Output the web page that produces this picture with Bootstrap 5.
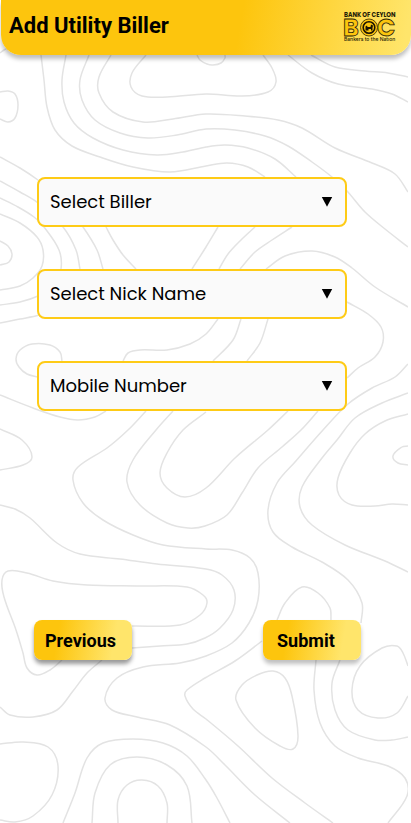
<!DOCTYPE html>
<html lang="en">
<head>
<meta charset="utf-8">
<meta name="viewport" content="width=device-width, initial-scale=1">
<title>Add Utility Biller</title>
<link href="https://cdn.jsdelivr.net/npm/bootstrap@5.3.0/dist/css/bootstrap.min.css" rel="stylesheet">
<style>
  body { background: #fff; color: #000; font-family: Roboto, sans-serif; }
  .contours { z-index: -1; stroke: #e3e3e3; stroke-width: 1.5; fill: none; }
  .top-bar {
    margin-left: 1px; height: 55px; padding: 0 15px 3px 8px;
    background: linear-gradient(100deg, #fdc50d 58%, #ffe56b 98%);
    border-radius: 0 0 20px 20px;
    box-shadow: 0 4px 4px rgba(0, 0, 0, .25);
  }
  .page-title { font-size: 22px; line-height: 28px; font-weight: 700; }
  .biller-form { padding: 122px 50px 0 34px; }
  .fields { gap: 42px; padding: 0 14px 0 3px; }
  .picker { display: grid; align-items: center; }
  .picker > * { grid-area: 1 / 1; }
  .picker .form-select {
    height: 50px; padding: 0 36px 0 11px;
    color: #000; background: #fafafa;
    border: 2px solid #fecb16; border-radius: 8px;
    font: 400 18px/28px Poppins, Inter, sans-serif;
  }
  .picker svg { justify-self: end; margin-right: 14px; pointer-events: none; }
  .actions { margin-top: 209px; }
  .btn-gold {
    width: 98px; height: 40px; padding: 2px 0 0 11px; text-align: left;
    font-size: 18px; line-height: 28px; font-weight: 700; color: #000;
    border: 0; border-radius: 8px;
    background: linear-gradient(100deg, #fdc50d 25%, #ffe56b 80%);
    box-shadow: 0 4px 4px rgba(0, 0, 0, .25);
  }
  .btn-gold:hover { color: #000; background: #fdc50d; }
  .btn-send { padding-left: 14px; }
  .btn-back { box-shadow: 0 4px 4px rgba(0, 0, 0, .4); }
</style>
<script src="https://cdn.jsdelivr.net/npm/bootstrap@5.3.0/dist/js/bootstrap.bundle.min.js" defer></script>
</head>
<body class="position-relative min-vh-100 overflow-x-hidden">

<svg class="contours position-absolute top-0 start-0 w-100 h-100" viewBox="0 0 411 823" preserveAspectRatio="xMinYMin slice" aria-hidden="true">
  <defs><clipPath id="sheet"><rect width="408" height="823"/></clipPath></defs>
  <g id="lines" clip-path="url(#sheet)"></g>
</svg>

<header class="top-bar d-flex align-items-center justify-content-between">
  <h1 class="page-title mb-0">Add Utility Biller</h1>
  <svg width="52" height="31" viewBox="0 0 52 31" role="img" aria-label="Bank of Ceylon" overflow="visible">
    <g fill="#221a05">
      <text x="0" y="6" font-size="6" font-weight="700" font-family="Poppins, Inter, sans-serif">BANK OF CEYLON</text>
      <text x="0" y="30" font-size="5" font-weight="500" font-family="Inter, sans-serif">Bankers to the Nation</text>
    </g>
    <g fill="#fdc50d" stroke="#2a2107" stroke-width=".8" font-family="Poppins, Inter, sans-serif" font-weight="700" font-size="24">
      <text x="-1" y="25">B</text>
      <text x="33" y="25">C</text>
      <circle cx="25" cy="16.500" r="8.500"/>
    </g>
    <circle cx="25" cy="16.500" r="5.800" fill="#fdc50d" stroke="#1a1403" stroke-width="1.600"/>
    <path d="M21.500 19.500v-4l1.500-1 .5 1.500h3l.5-2.500 2 1-.5 2.500v2.500h-1.500v-1.500h-2.500v1.500z" fill="#1a1403"/>
  </svg>
</header>

<main>
  <form class="biller-form">
    <div class="fields d-flex flex-column">
      <div class="picker">
        <select class="form-select" aria-label="Select Biller"><option>Select Biller</option></select>
        <svg width="12" height="10" viewBox="0 0 12 10" aria-hidden="true"><path d="M.8 0h10.400L6 9.800z"/></svg>
      </div>
      <div class="picker">
        <select class="form-select" aria-label="Select Nick Name"><option>Select Nick Name</option></select>
        <svg width="12" height="10" viewBox="0 0 12 10" aria-hidden="true"><path d="M.8 0h10.400L6 9.800z"/></svg>
      </div>
      <div class="picker">
        <select class="form-select" aria-label="Mobile Number"><option>Mobile Number</option></select>
        <svg width="12" height="10" viewBox="0 0 12 10" aria-hidden="true"><path d="M.8 0h10.400L6 9.800z"/></svg>
      </div>
    </div>
    <div class="actions d-flex justify-content-between">
      <button type="button" class="btn btn-gold btn-back">Previous</button>
      <button type="submit" class="btn btn-gold btn-send">Submit</button>
    </div>
  </form>
</main>

<script>
  // Contour lines: each row lists the points one smooth curve passes through.
  const contours = [
    "41 55 44 80 47 107 55 130 72 146 100 157 133 167 170 172 206 166 227 163 248 167 265 177",
    "66 55 62 80 64 102 74 123 93 138 123 150 157 155 183 152 206 147 225 145 248 148 275 159 296 177",
    "89 55 80 80 82 100 95 120 120 133 148 138 177 135 206 129 235 130 265 136 288 146 312 162 332 177 347 191 365 212 385 229 408 247",
    "111 55 99 77 99 93 113 112 143 122 173 119 206 114 245 116 278 120 302 128 335 148 372 163 395 174 408 192",
    "146 55 132 73 131 87 142 96 167 97 206 94 242 96 268 92 276 82 272 68 263 55",
    "197 55 200 60 207 64 213 65 221 63 225 58 225 55",
    "288 55 312 73 338 84 372 89 392 94 408 102",
    "311 55 335 67 365 71 388 73 408 77",
    "0 53 4 50 8 48",
    "0 92 8 91 15 94 18 105 15 118 8 122 0 119",
    "0 157 20 168 38 180 60 197 83 227 97 250 103 269",
    "0 181 20 192 38 203 63 227 76 250 80 269",
    "0 198 18 207 34 217 44 227 59 250 61 269 54 286 38 296 20 302 0 305",
    "80 269 74 290 60 306 39 315 20 319 0 323",
    "0 214 20 223 37 237 43 250 42 266 33 278 20 286 0 290",
    "0 241 8 246 12 254 9 262 0 265",
    "106 227 113 240 123 255 136 269",
    "62 361 60 352 50 345 32 344 20 350 16 359 19 367 27 374 38 377",
    "123 361 128 353 140 350 167 350 190 344 206 334 218 319",
    "218 227 206 247 192 269",
    "255 227 241 240 228 254 219 269",
    "292 227 272 240 255 252 240 269",
    "266 269 285 256 312 251 335 257 352 268 375 287 408 307",
    "347 302 368 314 381 327 383 342 375 357 358 368 347 378",
    "241 319 233 340 213 361",
    "268 319 260 343 247 361",
    "408 364 395 377 372 388 348 404 323 430 295 462 277 483 268 510 273 532 292 547 322 562 348 580 362 603 361 623",
    "408 393 382 403 355 418 337 440 322 458 302 487 300 507 312 525 345 545 385 561 408 572",
    "408 414 385 421 365 434 350 453 338 478 339 495 352 505 375 506 392 504 408 505",
    "408 446 402 447 393 456 398 463 408 465",
    "288 411 268 430 235 458 206 488 185 497 167 488 160 473 167 453 183 430 206 412",
    "318 411 301 430 282 447 258 468 242 493 227 515 205 526 188 528 167 523 140 505 127 482 133 460 156 430 173 411",
    "146 411 128 430 107 448 78 467 73 480 83 503 103 520 133 535 163 545 206 549 232 550 250 558 258 573 258 600 249 623 232 643 206 656 180 663 143 667 117 678 105 698 112 710 137 717 170 725 206 747 225 765 255 795 290 823",
    "277 620 285 603 302 587 318 593 330 608 331 620",
    "262 641 235 661 205 678 187 690 185 696 193 709 206 719 238 746 272 778 305 803 333 823",
    "0 505 15 509 30 518 57 543 80 554 120 559 157 564 206 569 222 575 234 590 233 610 220 628 205 638 187 644 160 646 132 648",
    "132 626 180 625 200 615 207 603 203 595 187 587 140 586 87 585 53 581 27 573 8 571 2 580 4 597 16 630 23 653 27 668 37 675 50 670 62 660",
    "0 429 22 440 32 457 23 465 0 470",
    "0 395 33 408 60 417 78 420 95 417 106 411",
    "0 707 10 715 33 717 57 710 73 691 87 673 102 660",
    "0 744 23 742 48 747 58 766 52 795 33 816 15 822 0 820",
    "63 823 75 793 87 758 103 743 133 739 163 743 187 756 206 780 217 798 230 823",
    "92 823 95 793 110 765 137 757 167 765 187 786 192 823",
    "118 823 118 800 127 785 142 780 158 786 167 803 167 823",
    "273 671 285 678 292 696 298 736 293 749 280 746 255 728 236 700 242 685 257 675 273 671",
    "316 660 314 690 320 723 335 746 358 758 388 766 405 778 407 796 388 823",
    "340 660 332 683 335 710 348 730 375 740 392 740 408 737",
    "408 666 403 653 397 646 382 648 360 666 352 690 358 710 378 718 397 713 408 696"
  ];

  function smoothPath(text) {
    const n = text.split(" ").map(Number), p = [];
    for (let i = 0; i < n.length; i += 2) p.push([n[i], n[i + 1]]);
    const last = p.length - 1;
    const closed = p[0][0] === p[last][0] && p[0][1] === p[last][1];
    let d = "M" + p[0];
    for (let i = 0; i < last; i++) {
      const a = p[i - 1] || (closed ? p[last - 1] : p[0]);
      const b = p[i], c = p[i + 1];
      const e = p[i + 2] || (closed ? p[1] : p[last]);
      const r = Math.hypot(c[0] - b[0], c[1] - b[1]) / 3;
      const u = Math.hypot(c[0] - a[0], c[1] - a[1]) || 1;
      const v = Math.hypot(e[0] - b[0], e[1] - b[1]) || 1;
      d += "C" + [b[0] + (c[0] - a[0]) / u * r, b[1] + (c[1] - a[1]) / u * r,
                  c[0] - (e[0] - b[0]) / v * r, c[1] - (e[1] - b[1]) / v * r, c[0], c[1]].join(" ");
    }
    return d;
  }

  const group = document.getElementById("lines");
  contours.forEach(function (line) {
    const path = document.createElementNS(group.namespaceURI, "path");
    path.setAttribute("d", smoothPath(line));
    group.appendChild(path);
  });
</script>
</body>
</html>
